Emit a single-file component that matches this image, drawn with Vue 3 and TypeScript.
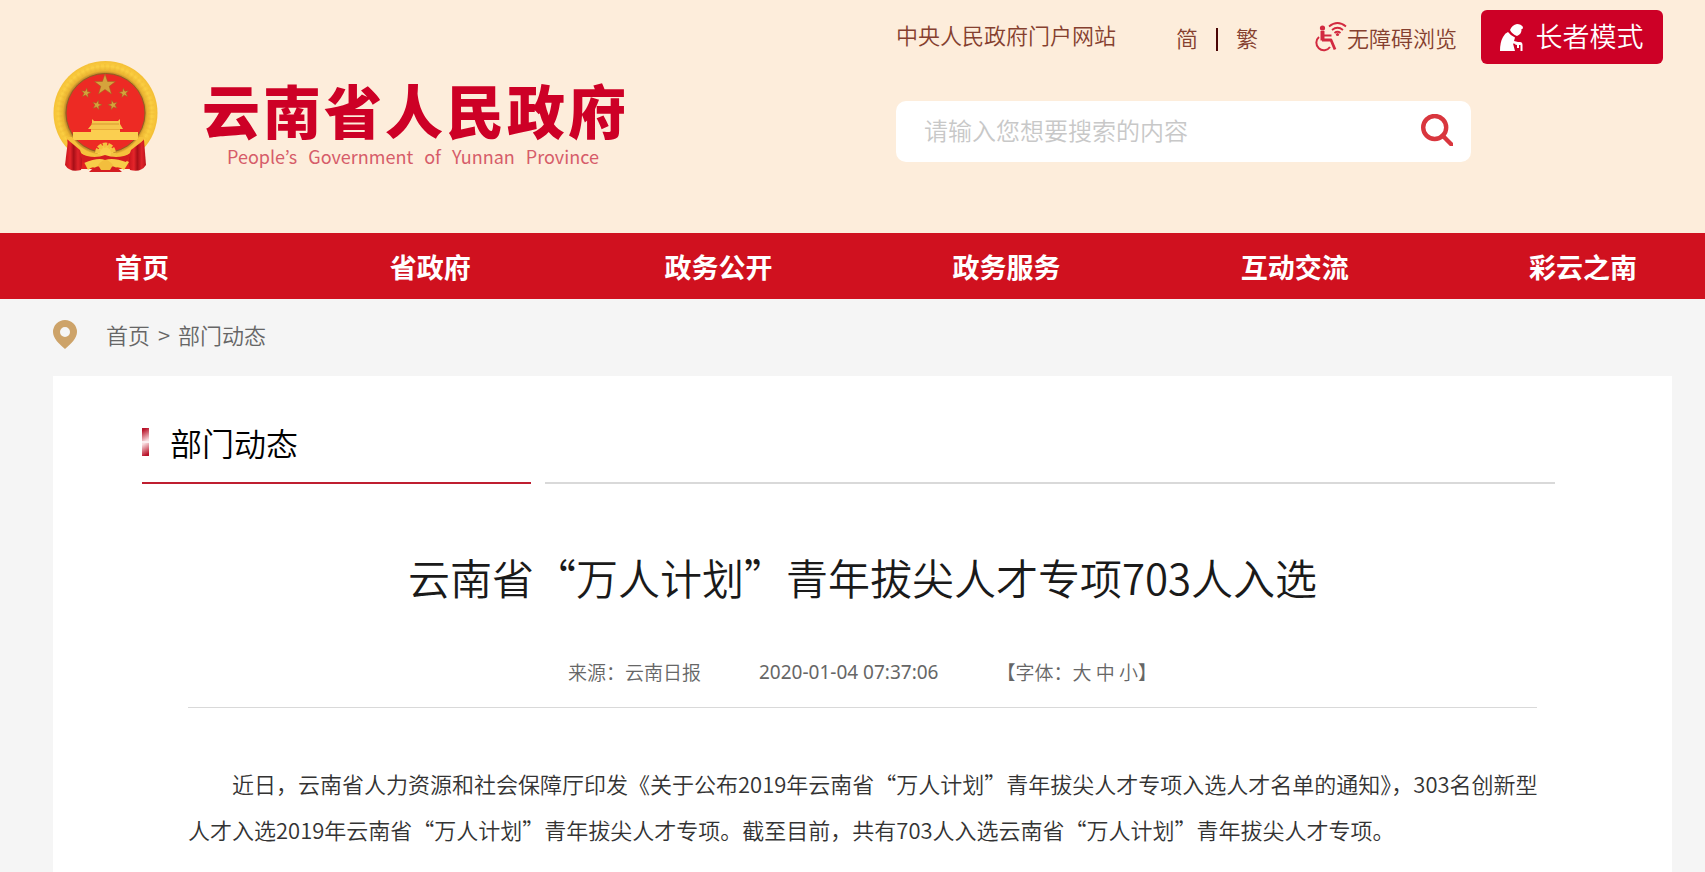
<script setup lang="ts">
import { ref } from 'vue'

const keyword = ref('')
const siteName: string[] = [...'云南省人民政府']
const siteNameEn: string[] = ['People’s', 'Government', 'of', 'Yunnan', 'Province']
const navItems: string[] = ['首页', '省政府', '政务公开', '政务服务', '互动交流', '彩云之南']
const fontSizes: string[] = ['大', '中', '小']

interface Star { x: number; y: number; r: number; turn: number }
const stars: Star[] = [
  { x: 52, y: 24, r: 11, turn: 0 },
  { x: 33, y: 32, r: 5, turn: 10 },
  { x: 71, y: 32, r: 5, turn: -10 },
  { x: 44, y: 44, r: 5, turn: 15 },
  { x: 60, y: 44, r: 5, turn: -15 },
]

function starPoints(s: Star): string {
  return Array.from({ length: 10 }, (_, i) => {
    const radius = i % 2 ? s.r * 0.4 : s.r
    const a = ((i * 36 - 90 + s.turn) * Math.PI) / 180
    return `${(s.x + radius * Math.cos(a)).toFixed(2)},${(s.y + radius * Math.sin(a)).toFixed(2)}`
  }).join(' ')
}
</script>

<template>
  <div class="page">
    <header class="header">
      <a class="brand" href="#">
        <svg class="emblem" viewBox="0 0 105 112" aria-hidden="true">
          <defs>
            <radialGradient id="ring" cx="52" cy="52" r="52" gradientUnits="userSpaceOnUse">
              <stop offset="0.76" stop-color="#b9822a" />
              <stop offset="0.81" stop-color="#eab431" />
              <stop offset="0.9" stop-color="#fbcf42" />
              <stop offset="1" stop-color="#f4bf35" />
            </radialGradient>
            <linearGradient id="cloth" x1="0" x2="1">
              <stop offset="0" stop-color="#c8141c" />
              <stop offset="0.3" stop-color="#e5252a" />
              <stop offset="0.5" stop-color="#a80f17" />
              <stop offset="0.75" stop-color="#e0242a" />
              <stop offset="1" stop-color="#bb141b" />
            </linearGradient>
          </defs>
          <circle cx="52.5" cy="52" r="52" fill="url(#ring)" />
          <circle cx="52.5" cy="52" r="46" fill="none" stroke="#e2a229" stroke-width="6" stroke-dasharray="2 3" opacity="0.15" />
          <circle cx="52.5" cy="52" r="39.5" fill="#ed2a24" stroke="#8f5f22" stroke-width="1" />
          <polygon v-for="(s, i) in stars" :key="i" :points="starPoints(s)" fill="#d5a33c" stroke="#9c6420" stroke-width="0.5" />
          <path d="M14 78Q30 98 52 98Q75 98 91 78L84 108H20Z" fill="#e3221f" />
          <path d="M39 58l2 2h24l2-2v5l3 5H35l4-5z" fill="#f6c64c" />
          <path d="M38 68h29v4H38z" fill="#e9ad3a" />
          <path d="M38 63h28" stroke="#d79a31" />
          <path d="M20 71h18v-2h29v2h18v8H20z" fill="#fbcf50" />
          <path d="M19 76Q30 92 45 93L40 98Q23 93 13 76ZM86 76Q75 92 60 93L65 98Q82 93 92 76Z" fill="#f5c23c" />
          <path d="M15 79L27 89Q31 98 28 109Q17 112 12 104Z" fill="url(#cloth)" />
          <path d="M91 79L78 89Q74 98 77 109Q88 112 93 104Z" fill="url(#cloth)" />
          <circle cx="52.5" cy="92" r="8" fill="#f9cf4d" stroke="#f3c33f" stroke-width="5" stroke-dasharray="4 1" />
          <path d="M31 101Q42 94 52 98Q63 94 76 101L71 109Q63 103 60 110H44Q41 103 35 109Z" fill="#f7cd49" />
          <path d="M26 92Q40 99 52 94Q65 99 79 92L73 101Q60 96 52 99Q45 96 31 102Z" fill="#d41c20" />
          <path d="M36 111Q43 103 52 106Q62 103 69 111Z" fill="#d41c20" />
          <path d="M45 104Q49 99 52.500 99Q56 99 60 104L57 109H48Z" fill="#f3be3d" />
        </svg>
        <span class="brand-text">
          <span class="brand-cn"><span v-for="c in siteName" :key="c">{{ c }}</span></span>
          <span class="brand-en" lang="en"><span v-for="w in siteNameEn" :key="w">{{ w }}</span></span>
        </span>
      </a>

      <div class="tools">
        <div class="tool-links">
          <a class="portal" href="#">中央人民政府门户网站</a>
          <span class="scripts">
            <a href="#">简</a>
            <span class="divider"></span>
            <a href="#">繁</a>
          </span>
          <a class="access" href="#">
            <svg class="access-icon" viewBox="0 0 33 31" fill="none" stroke="#d22a40" aria-hidden="true">
              <circle cx="8.500" cy="6" r="2.600" fill="#d22a40" stroke="none" />
              <path d="M8.500 9v9.500" stroke-width="4" />
              <path d="M8 18h9l4 9.500" stroke-width="2.800" stroke-linejoin="round" />
              <path d="M10 13.500h7.500" stroke-width="2" />
              <path d="M5 15a7.500 7.500 0 1 0 11 10" stroke-width="2" />
              <path d="M15 4.500q8.500-7 17 0M18 8q5.500-4.500 11 0M20.500 11q3-2.500 6 0" stroke-width="1.800" />
              <circle cx="23.500" cy="12.500" r="1.600" fill="#d22a40" stroke="none" />
            </svg>
            <span>无障碍浏览</span>
          </a>
          <button class="elder" type="button">
            <svg class="elder-icon" viewBox="0 0 23 27" fill="#fff" aria-hidden="true">
              <path d="M10 6Q12 1 17 0Q21 0 23 3L22.500 5L21.500 5Q22 10 17 12Q12 10 10 6Z" />
              <path d="M8 8Q11 12 15 13.500L14 17L20 18.500L19 20.500L13 19.500L15 27H0Q0 18 3 13Q5 9 8 8Z" />
              <path d="M15 20.500q1-2.500 5-2.500 2.500 0 2.500 3v6h-2v-6h-1.500v3h-2v-3z" />
            </svg>
            <span>长者模式</span>
          </button>
        </div>
        <form class="search" role="search" @submit.prevent>
          <input v-model="keyword" type="text" placeholder="请输入您想要搜索的内容" aria-label="请输入您想要搜索的内容" />
          <button type="submit" aria-label="搜索">
            <svg viewBox="0 0 32 32" fill="none" stroke="#d9363e" aria-hidden="true">
              <circle cx="13.700" cy="13.500" r="11.500" stroke-width="4.400" />
              <path d="M21.500 21.500l9 9" stroke-width="4.400" stroke-linecap="round" />
            </svg>
          </button>
        </form>
      </div>
    </header>

    <nav class="nav">
      <ul>
        <li v-for="item in navItems" :key="item"><a href="#">{{ item }}</a></li>
      </ul>
    </nav>

    <nav class="crumbs">
      <svg class="pin" viewBox="0 0 24 29" aria-hidden="true">
        <path fill="#cda369" fill-rule="evenodd" d="M12 0a12 12 0 0 1 12 12c0 6-6 12-12 17C6 24 0 18 0 12A12 12 0 0 1 12 0zm0 7a5 5 0 1 0 0 10 5 5 0 0 0 0-10z" />
      </svg>
      <span class="trail">
        <a href="#">首页</a>
        <span class="arrow">&gt;</span>
        <a href="#">部门动态</a>
      </span>
    </nav>

    <main class="card">
      <div class="section">
        <h2><span class="marker"></span><span>部门动态</span></h2>
        <div class="section-rest"></div>
      </div>
      <article class="article">
        <h1>云南省“万人计划”青年拔尖人才专项703人入选</h1>
        <div class="meta">
          <span>来源：云南日报</span>
          <time datetime="2020-01-04T07:37:06">2020-01-04 07:37:06</time>
          <span>【字体：<template v-for="(s, i) in fontSizes" :key="s">{{ i ? ' ' : '' }}<a href="#">{{ s }}</a></template>】</span>
        </div>
        <p>近日，云南省人力资源和社会保障厅印发《关于公布2019年云南省“万人计划”青年拔尖人才专项入选人才名单的通知》，303名创新型人才入选2019年云南省“万人计划”青年拔尖人才专项。截至目前，共有703人入选云南省“万人计划”青年拔尖人才专项。</p>
      </article>
    </main>
  </div>
</template>

<style>
body {
  background: #f5f5f5;
}
</style>

<style scoped>
.page {
  font-family: 'Noto Sans CJK SC', 'Noto Sans', sans-serif;
  font-size: 22px;
  line-height: 32px;
  font-weight: 350;
  overflow: hidden;
  color: #333;
}
a {
  color: inherit;
  text-decoration: none;
}
.header {
  display: flex;
  justify-content: space-between;
  box-sizing: border-box;
  height: 233px;
  padding: 10px 42px 0 53px;
  background: #fdeddb;
}
.brand {
  display: flex;
  align-items: flex-start;
  gap: 44px;
  padding-top: 51px;
}
.emblem {
  width: 105px;
  height: 112px;
}
.brand-text {
  display: flex;
  flex-direction: column;
  padding-top: 16px;
}
.brand-cn {
  display: flex;
  gap: 3px;
  font-size: 58px;
  line-height: 64px;
  font-weight: 900;
  color: #cd0026;
}
.brand-en {
  display: flex;
  gap: 11px;
  padding: 3px 0 0 25px;
  font-family: 'Noto Sans CJK KR', sans-serif;
  font-size: 18px;
  font-weight: 400;
  line-height: 24px;
  color: #d65c69;
}
.tools {
  width: 48%;
  max-width: 767px;
}
.tool-links {
  display: flex;
  align-items: center;
  justify-content: space-between;
  height: 54px;
  color: #85402f;
  white-space: nowrap;
}
.portal {
  padding-bottom: 6px;
}
.scripts {
  display: flex;
  align-items: center;
  gap: 18px;
  padding-left: 36px;
}
.divider {
  width: 2px;
  height: 23px;
  margin-top: 4px;
  background: #4a0505;
}
.access {
  display: flex;
  align-items: center;
  padding-left: 32px;
}
.access-icon {
  width: 33px;
  height: 31px;
}
.elder {
  display: flex;
  align-items: center;
  justify-content: center;
  gap: 12px;
  width: 182px;
  height: 54px;
  padding: 0;
  border: 0;
  border-radius: 6px;
  background: #cd0026;
  color: #fff;
  font: inherit;
  font-size: 27px;
}
.elder span {
  padding-bottom: 2px;
}
.elder-icon {
  width: 23px;
  height: 27px;
}
.search {
  display: flex;
  align-items: center;
  box-sizing: border-box;
  width: 75%;
  height: 61px;
  margin-top: 37px;
  padding: 0 18px 4px 28px;
  border-radius: 10px;
  background: #fff;
}
.search input {
  flex: 1;
  min-width: 0;
  height: 40px;
  padding: 0;
  border: 0;
  outline: 0;
  background: transparent;
  font: inherit;
  font-size: 24px;
}
.search input::placeholder {
  color: #c8c8c8;
}
.search button {
  width: 32px;
  height: 32px;
  padding: 0;
  border: 0;
  background: none;
}
.search svg {
  display: block;
}
.nav {
  background: #d0111f;
}
.nav ul {
  display: grid;
  grid-template-columns: repeat(6, 1fr);
  margin: 0 -22px 0 -2px;
  padding: 0;
  list-style: none;
  text-align: center;
}
.nav a {
  display: block;
  padding: 4px 0 2px;
  line-height: 60px;
  font-size: 27px;
  font-weight: 700;
  color: #fff;
}
.crumbs {
  display: flex;
  align-items: center;
  height: 77px;
  margin: 0 33px 0 53px;
  box-sizing: border-box;
  padding-bottom: 6px;
  color: #666;
}
.pin {
  width: 24px;
  height: 29px;
  margin-right: 29px;
}
.trail {
  display: flex;
  padding-bottom: 2px;
}
.arrow {
  margin: 0 8px;
}
.card {
  margin: 0 33px 0 53px;
  min-height: 496px;
  background: #fff;
}
.section {
  display: flex;
  gap: 14px;
  padding: 43px 117px 0 89px;
}
.section h2 {
  display: flex;
  align-items: center;
  gap: 21px;
  flex: 0 0 27.5%;
  margin: 0;
  padding-bottom: 17px;
  border-bottom: 2px solid #bf1e30;
  box-sizing: border-box;
  font-size: 32px;
  line-height: 46px;
  font-weight: inherit;
  color: #000;
}
.marker {
  width: 7px;
  height: 28px;
  background:
    linear-gradient(150deg, #b9142a 15%, #f8dde0 90%) top / 100% 13px no-repeat,
    linear-gradient(330deg, #b9142a 15%, #f8dde0 90%) bottom / 100% 13px no-repeat,
    #fbeef0;
}
.section-rest {
  flex: 1;
  border-bottom: 2px solid #d9d9d9;
}
.article {
  padding: 62px 122px 17px 135px;
}
.article h1 {
  margin: 0 13px 0 0;
  font-size: 42px;
  line-height: 62px;
  font-weight: inherit;
  text-align: center;
  color: #1a1a1a;
}
.meta {
  display: flex;
  justify-content: center;
  gap: 58px;
  margin: 49px 13px 0 0;
  padding-bottom: 20px;
  border-bottom: 1px solid #d9d9d9;
  font-size: 19px;
  line-height: 30px;
  color: #666;
  text-spacing-trim: space-all;
}
.meta time {
  font-family: 'Noto Sans', sans-serif;
  font-weight: 400;
}
.article p {
  margin: 52px 0 0;
  line-height: 46px;
  text-indent: 2em;
}
</style>
